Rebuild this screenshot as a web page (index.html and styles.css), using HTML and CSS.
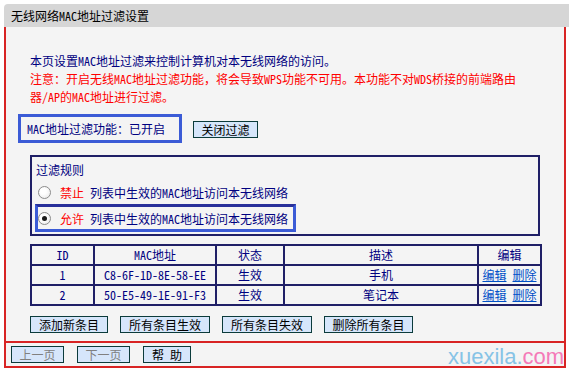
FILE: index.html
```html
<!DOCTYPE html>
<html lang="zh-CN">
<head>
    <meta charset="UTF-8">
    <meta name="viewport" content="width=device-width, initial-scale=1.0">
    <title>无线网络MAC地址过滤设置</title>
    <link rel="stylesheet" href="styles.css">
</head>
<body>
    <div class="page">
        <div class="title">无线网络MAC地址过滤设置</div>
        <div class="panel">
            <div class="main">
                <p class="intro">本页设置MAC地址过滤来控制计算机对本无线网络的访问。</p>
                <p class="warn">注意：开启无线MAC地址过滤功能，将会导致WPS功能不可用。本功能不对WDS桥接的前端路由<br>器/AP的MAC地址进行过滤。</p>

                <div class="status-row">
                    <div class="status">MAC地址过滤功能：已开启</div>
                    <button class="btn btn-close">关闭过滤</button>
                </div>

                <div class="rules">
                    <div class="rules-title">过滤规则</div>
                    <div class="rule">
                        <span class="radio"></span>
                        <span class="red">禁止</span>列表中生效的MAC地址访问本无线网络
                    </div>
                    <div class="rule rule-on">
                        <span class="radio checked"></span>
                        <span class="red">允许</span>列表中生效的MAC地址访问本无线网络
                    </div>
                </div>

                <table class="list">
                    <tr>
                        <th class="c-id">ID</th>
                        <th class="c-mac">MAC地址</th>
                        <th class="c-state">状态</th>
                        <th class="c-desc">描述</th>
                        <th class="c-edit">编辑</th>
                    </tr>
                    <tr>
                        <td>1</td>
                        <td>C8-6F-1D-8E-58-EE</td>
                        <td>生效</td>
                        <td>手机</td>
                        <td><a href="#">编辑</a> <a href="#">删除</a></td>
                    </tr>
                    <tr>
                        <td>2</td>
                        <td>50-E5-49-1E-91-F3</td>
                        <td>生效</td>
                        <td>笔记本</td>
                        <td><a href="#">编辑</a> <a href="#">删除</a></td>
                    </tr>
                </table>

                <div class="actions">
                    <button class="btn w78">添加新条目</button>
                    <button class="btn w90">所有条目生效</button>
                    <button class="btn w90">所有条目失效</button>
                    <button class="btn w89">删除所有条目</button>
                </div>
            </div>

            <div class="footer">
                <button class="btn w53" disabled>上一页</button>
                <button class="btn w53" disabled>下一页</button>
                <button class="btn w48">帮 助</button>
            </div>
        </div>

        <div class="watermark"><span class="wm-blue">xuexila.</span><span class="wm-pink">com</span></div>
    </div>
</body>
</html>
```

FILE: styles.css
```css
body {
    margin: 0;
    background: #ffffff;
    font-family: "Noto Sans Mono CJK SC", "Noto Sans CJK SC", sans-serif;
    font-size: 12px;
    color: #000080;
}

.page {
    position: relative;
    width: 565px;
    margin: 4px 0 0 4px;
}

.title {
    height: 23px;
    line-height: 23px;
    padding-left: 7px;
    background: #d6d6d6;
    border-top-left-radius: 4px;
    color: #000;
}

.panel {
    width: 558px;
    background: #f4f4f4;
    border: 2px solid #d82424;
    border-top: none;
}

.main {
    padding: 25px 24px 8px 24px;
}

.intro, .warn {
    margin: 0;
    line-height: 18px;
}

.warn {
    color: #ff0000;
}

.status-row {
    display: flex;
    align-items: center;
    margin-top: 8px;
}

.status {
    width: 152px;
    height: 23px;
    line-height: 23px;
    margin-left: -12px;
    padding-left: 6px;
    border: 3px solid #3b5bd6;
    color: #000080;
}

.btn {
    height: 17px;
    padding: 0;
    font-family: inherit;
    font-size: 12px;
    line-height: 15px;
    color: #000;
    background: #d6e6fb;
    border: 1px solid #0b3b3b;
    border-radius: 0;
}

.btn:disabled {
    color: #808080;
}

.btn-close {
    width: 65px;
    margin: 2px 0 0 11px;
}

.rules {
    width: 506px;
    height: 77px;
    margin-top: 12px;
    border: 2px solid #1f1f66;
}

.rules-title {
    line-height: 18px;
    padding: 4px 0 0 4px;
}

.rule {
    display: flex;
    align-items: center;
    height: 18px;
    margin-top: 4px;
    padding-left: 6px;
}

.rule-on {
    width: 255px;
    height: 22px;
    margin: 3px 0 0 3px;
    padding-left: 0;
    border: 3px solid #3b5bd6;
    border-top-color: #28309a;
}

.radio {
    position: relative;
    width: 11px;
    height: 11px;
    margin-right: 9px;
    border: 1px solid #8c8c8c;
    border-radius: 50%;
    background: radial-gradient(circle at 40% 40%, #ffffff 30%, #e4e4e4 100%);
}

.radio.checked::after {
    content: "";
    position: absolute;
    left: 3px;
    top: 3px;
    width: 5px;
    height: 5px;
    border-radius: 50%;
    background: #1a1a1a;
}

.red {
    color: #ff0000;
    margin-right: 6px;
}

.list {
    width: 510px;
    margin-top: 8px;
    border-collapse: collapse;
    border: 2px solid #1f1f66;
    table-layout: fixed;
}

.list th, .list td {
    height: 18px;
    padding: 0;
    border: 2px solid #1f1f66;
    text-align: center;
    font-weight: normal;
    line-height: 18px;
    color: #000080;
}

.c-id { width: 61px; }
.c-mac { width: 120px; }
.c-state { width: 66px; }
.c-desc { width: 192px; }
.c-edit { width: 61px; }

.list a {
    color: #0050c8;
    text-decoration: underline;
}

.actions {
    display: flex;
    gap: 12px;
    margin-top: 10px;
}

.w78 { width: 78px; }
.w90 { width: 90px; }
.w89 { width: 89px; }
.w53 { width: 53px; }
.w48 { width: 48px; }

.footer {
    display: flex;
    gap: 13px;
    padding: 3px 0 3px 5px;
    border-top: 2px solid #d82424;
}

.watermark {
    position: absolute;
    left: 444px;
    top: 342px;
    font-family: "Liberation Sans", Arial, sans-serif;
    font-size: 22px;
    line-height: 22px;
}

.wm-blue {
    color: #86c3e6;
}

.wm-pink {
    color: #f57ab8;
}
```
